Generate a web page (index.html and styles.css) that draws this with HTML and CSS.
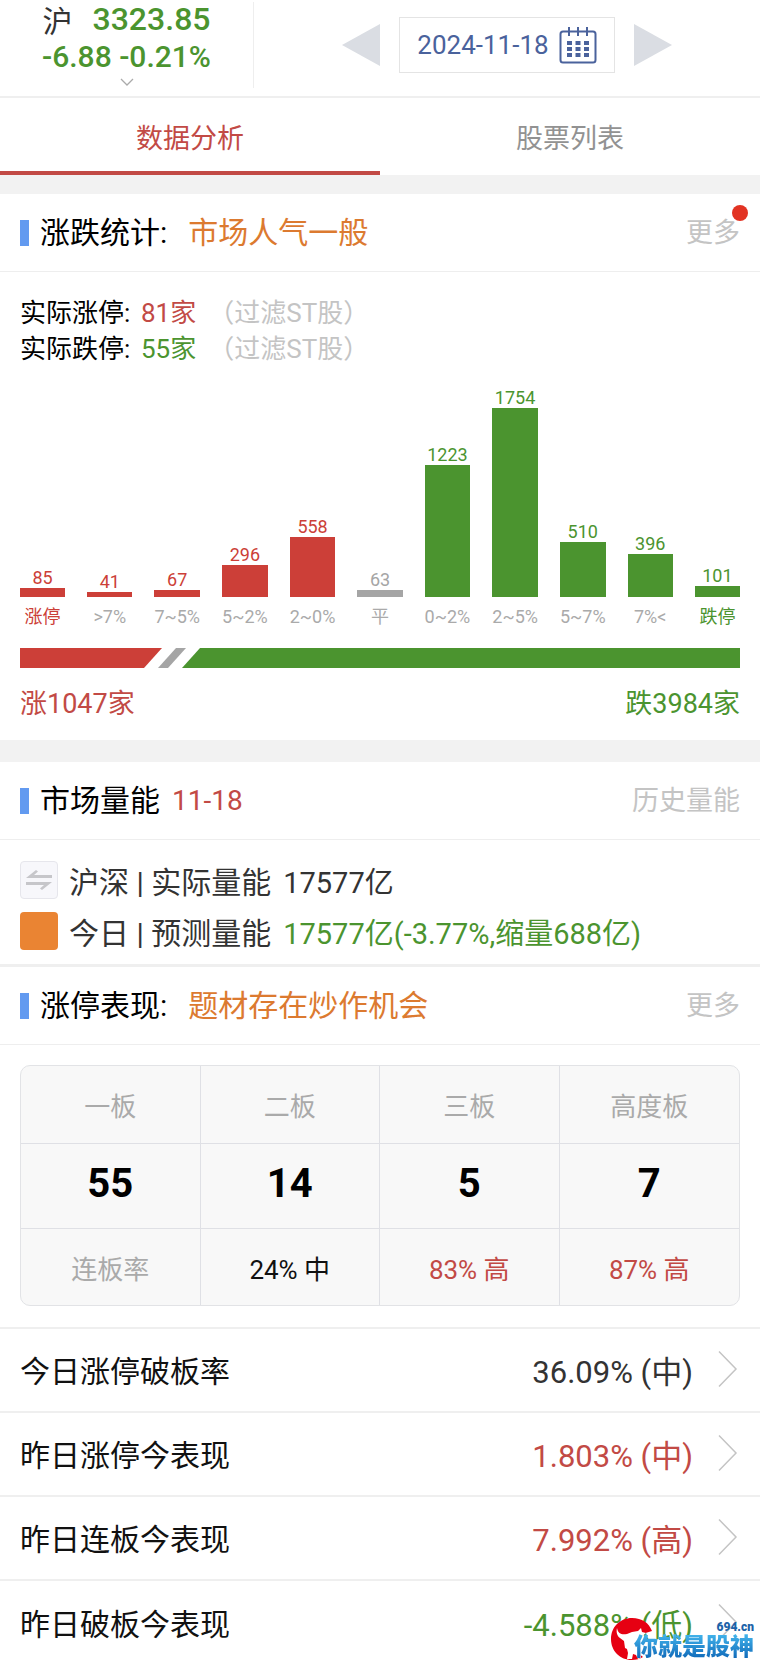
FILE: index.html
```
<!DOCTYPE html>
<html lang="zh-CN">
<head>
  <meta charset="UTF-8">
  <meta name="viewport" content="width=device-width, initial-scale=1.0">
  <title>数据分析</title>
  <link rel="stylesheet" href="styles.css">
</head>
<body>
  <div class="page">
    <header class="header">
      <div class="index">
        <div class="index-main">
          <span class="index-name">沪</span>
          <strong class="index-value">3323.85</strong>
        </div>
        <div class="index-change">-6.88 -0.21%</div>
        <svg class="index-arrow" width="14" height="8" viewBox="0 0 14 8"><path d="M1 1l6 6 6-6" fill="none" stroke="#aaa" stroke-width="1.3"/></svg>
      </div>
      <nav class="date-nav">
        <button type="button" class="arrow" aria-label="前一天">
          <svg width="38" height="42" viewBox="0 0 38 42"><path d="M38 0v42L0 21z" fill="#dadde3"/></svg>
        </button>
        <button type="button" class="date">
          <span>2024-11-18</span>
          <svg width="38" height="38" viewBox="0 0 38 38">
            <rect x="1.5" y="5.5" width="35" height="31" rx="2.5" fill="none" stroke="#4a629c" stroke-width="2"/>
            <path d="M10 1v9M19 1v9M28 1v9" stroke="#4a629c" stroke-width="2"/>
            <path d="M8 17h22M8 23h22M8 29h22" stroke="#4a629c" stroke-width="4" stroke-dasharray="5 3.500"/>
          </svg>
        </button>
        <button type="button" class="arrow" aria-label="后一天">
          <svg width="38" height="42" viewBox="0 0 38 42"><path d="M0 0v42l38-21z" fill="#dadde3"/></svg>
        </button>
      </nav>
    </header>

    <div class="tabs">
      <button type="button" class="tab active">数据分析</button>
      <button type="button" class="tab">股票列表</button>
    </div>

    <section class="block">
      <div class="section-head">
        <h2>涨跌统计:</h2>
        <span class="hint orange">市场人气一般</span>
        <a href="#" class="more badge">更多</a>
      </div>

      <div class="stats">
        <p><span class="stat-name">实际涨停:</span><span class="red">81家</span><span class="note">（过滤ST股）</span></p>
        <p><span class="stat-name">实际跌停:</span><span class="green">55家</span><span class="note">（过滤ST股）</span></p>
      </div>

      <div class="chart">
        <div class="col up"><span class="count">85</span><div class="bar" style="height: 9px"></div><span class="range named">涨停</span></div>
        <div class="col up"><span class="count">41</span><div class="bar" style="height: 5px"></div><span class="range">&gt;7%</span></div>
        <div class="col up"><span class="count">67</span><div class="bar" style="height: 7px"></div><span class="range">7~5%</span></div>
        <div class="col up"><span class="count">296</span><div class="bar" style="height: 32px"></div><span class="range">5~2%</span></div>
        <div class="col up"><span class="count">558</span><div class="bar" style="height: 60px"></div><span class="range">2~0%</span></div>
        <div class="col flat"><span class="count">63</span><div class="bar" style="height: 7px"></div><span class="range">平</span></div>
        <div class="col down"><span class="count">1223</span><div class="bar" style="height: 132px"></div><span class="range">0~2%</span></div>
        <div class="col down"><span class="count">1754</span><div class="bar" style="height: 189px"></div><span class="range">2~5%</span></div>
        <div class="col down"><span class="count">510</span><div class="bar" style="height: 55px"></div><span class="range">5~7%</span></div>
        <div class="col down"><span class="count">396</span><div class="bar" style="height: 43px"></div><span class="range">7%&lt;</span></div>
        <div class="col down"><span class="count">101</span><div class="bar" style="height: 11px"></div><span class="range named">跌停</span></div>
      </div>

      <div class="ratio">
        <div class="ratio-up"></div>
        <div class="ratio-flat"></div>
        <div class="ratio-down"></div>
      </div>
      <div class="totals">
        <span class="red">涨1047家</span>
        <span class="green">跌3984家</span>
      </div>
    </section>

    <section class="block">
      <div class="section-head">
        <h2>市场量能</h2>
        <span class="head-date red">11-18</span>
        <a href="#" class="more">历史量能</a>
      </div>
      <div class="volume">
        <div class="volume-row">
          <button type="button" class="swap" aria-label="切换">
            <svg width="26" height="20" viewBox="0 0 26 20"><path d="M26 8H0L10 0l2 1.500-4 3.500h18zM0 12h26L16 20l-2-1.500 4-3.500H0z" fill="#c6c6ca"/></svg>
          </button>
          <span>沪深 | 实际量能</span>
          <span class="amount">17577亿</span>
        </div>
        <div class="volume-row">
          <span class="swatch"></span>
          <span>今日 | 预测量能</span>
          <span class="amount green">17577亿(-3.77%,缩量688亿)</span>
        </div>
      </div>
    </section>

    <section class="limit">
      <div class="section-head">
        <h2>涨停表现:</h2>
        <span class="hint orange">题材存在炒作机会</span>
        <a href="#" class="more">更多</a>
      </div>
      <div class="table-wrap">
        <table class="boards">
          <thead>
            <tr><th>一板</th><th>二板</th><th>三板</th><th>高度板</th></tr>
          </thead>
          <tbody>
            <tr class="nums"><td>55</td><td>14</td><td>5</td><td>7</td></tr>
            <tr class="rates"><td class="muted">连板率</td><td>24% 中</td><td class="red">83% 高</td><td class="red">87% 高</td></tr>
          </tbody>
        </table>
      </div>
    </section>

    <div class="list">
      <a href="#" class="item">
        <span>今日涨停破板率</span>
        <span class="item-value">36.09% (中)</span>
        <svg width="20" height="38" viewBox="0 0 20 38"><path d="M1 1.500l17 17.500L1 36.500" fill="none" stroke="#c4c4c4" stroke-width="1.500"/></svg>
      </a>
      <a href="#" class="item">
        <span>昨日涨停今表现</span>
        <span class="item-value red">1.803% (中)</span>
        <svg width="20" height="38" viewBox="0 0 20 38"><path d="M1 1.500l17 17.500L1 36.500" fill="none" stroke="#c4c4c4" stroke-width="1.500"/></svg>
      </a>
      <a href="#" class="item">
        <span>昨日连板今表现</span>
        <span class="item-value red">7.992% (高)</span>
        <svg width="20" height="38" viewBox="0 0 20 38"><path d="M1 1.500l17 17.500L1 36.500" fill="none" stroke="#c4c4c4" stroke-width="1.500"/></svg>
      </a>
      <a href="#" class="item">
        <span>昨日破板今表现</span>
        <span class="item-value green">-4.588% (低)</span>
        <svg width="20" height="38" viewBox="0 0 20 38"><path d="M1 1.500l17 17.500L1 36.500" fill="none" stroke="#c4c4c4" stroke-width="1.500"/></svg>
      </a>
    </div>

    <div class="brand">
      <svg class="brand-logo" width="44" height="44" viewBox="0 0 44 44">
        <path d="M42 14C39 6 32 1 22 1 10 1 1 10 1 22s9 21 21 21c4 0 8-1 11-3l-5-4 1-18z" fill="#e60012"/>
        <path d="M7 11c1 6 5 7 10 6l5-2 6-1 3-3 1 4 4 1-5 4-1 9 1 12-3 1-2-4-3-1-1 5h-5l1-6-1-4-2-1-1-7-4-3c-3-2-4-6-3-10z" fill="#fff"/>
      </svg>
      <div class="brand-text">
        <span class="brand-site">694.cn</span>
        <span class="brand-name">你就是股神</span>
      </div>
    </div>
  </div>
</body>
</html>
```

FILE: styles.css
```
* {
  box-sizing: border-box;
}
body {
  margin: 0;
  background: #fff;
  color: #111;
  font-family: Roboto, "Noto Sans CJK SC", sans-serif;
  font-size: 30px;
}
button {
  padding: 0;
  border: none;
  background: none;
  font: inherit;
  cursor: pointer;
}
a {
  color: inherit;
  text-decoration: none;
}
svg {
  display: block;
}
h2,
p {
  margin: 0;
  font-size: inherit;
  font-weight: 400;
}
.page {
  position: relative;
  overflow: hidden;
}
.red {
  color: #c24a45;
}
.green {
  color: #4b942f;
}
.orange {
  color: #dc7a30;
}

/* header */
.header {
  display: flex;
  height: 98px;
  padding: 2px 0 8px;
  border-bottom: 2px solid #efefef;
}
.index {
  flex: 1;
  display: flex;
  flex-direction: column;
  align-items: center;
  border-right: 1px solid #eee;
  color: #4b942f;
}
.index-main {
  display: flex;
  align-items: center;
  gap: 20px;
  height: 34px;
}
.index-name {
  color: #333;
}
.index-value {
  font-size: 32px;
  font-weight: 500;
}
.index-change {
  line-height: 42px;
  font-weight: 500;
}
.date-nav {
  flex: 2;
  display: flex;
  align-items: center;
  justify-content: center;
  gap: 19px;
}
.date {
  display: flex;
  align-items: center;
  justify-content: center;
  gap: 10px;
  height: 56px;
  padding: 0 17px;
  border: 1px solid #e4e4e4;
  color: #4a629c;
  font-size: 26px;
}

/* tabs */
.tabs {
  display: flex;
  height: 77px;
}
.tab {
  flex: 1;
  padding-top: 4px;
  border-bottom: 4px solid transparent;
  color: #929292;
  font-size: 27px;
}
.tab.active {
  border-color: #c24a45;
  color: #c24a45;
}

/* sections */
.block:nth-of-type(1) {
  border-top: 19px solid #f2f2f2;
  border-bottom: 22px solid #f2f2f2;
}
.block:nth-of-type(2) {
  border-bottom: 3px solid #efefef;
}
.section-head {
  display: flex;
  align-items: center;
  height: 78px;
  padding: 0 20px;
  border-bottom: 1px solid #eee;
  line-height: 42px;
}
.section-head::before {
  content: "";
  width: 9px;
  height: 26px;
  margin-right: 11px;
  background: #629af0;
}
.section-head h2 {
  color: #000;
}
.hint {
  margin-left: 21px;
}
.head-date {
  margin-left: 12px;
  font-size: 28px;
}
.more {
  position: relative;
  margin-left: auto;
  color: #c4c4c4;
  font-size: 27px;
}
.badge::after {
  content: "";
  position: absolute;
  top: -7px;
  right: -8px;
  width: 16px;
  height: 16px;
  border-radius: 50%;
  background: #e23323;
}

/* up / down statistics */
.stats {
  padding: 23px 20px 0;
  font-size: 26px;
  line-height: 36px;
}
.stats p {
  display: flex;
}
.stat-name {
  width: 121px;
  color: #000;
}
.note {
  margin-left: 12px;
  color: #c4c4c4;
}
.chart {
  display: grid;
  grid-template-columns: repeat(11, 1fr);
  gap: 22px;
  align-items: end;
  height: 260px;
  padding: 0 20px;
  font-size: 18px;
}
.col {
  display: flex;
  flex-direction: column;
  align-items: center;
  white-space: nowrap;
}
.count {
  line-height: 21px;
}
.bar {
  align-self: stretch;
  background: currentColor;
}
.range {
  height: 30px;
  padding-top: 6px;
  color: #aaa;
  line-height: 28px;
}
.up {
  color: #cc3f38;
}
.down {
  color: #4b942f;
}
.flat {
  color: #a5a5a5;
}
.named {
  color: inherit;
}
.ratio {
  display: flex;
  height: 20px;
  margin: 21px 20px 0;
}
.ratio-up {
  flex: 0 0 142px;
  background: #cc3f38;
  clip-path: polygon(0 0, 100% 0, calc(100% - 18px) 100%, 0 100%);
}
.ratio-flat {
  width: 28px;
  margin: 0 -4px;
  background: #a5a5a5;
  clip-path: polygon(18px 0, 100% 0, 10px 100%, 0 100%);
}
.ratio-down {
  flex: 1;
  background: #4b942f;
  clip-path: polygon(18px 0, 100% 0, 100% 100%, 0 100%);
}
.totals {
  display: flex;
  justify-content: space-between;
  padding: 16px 20px;
  font-size: 27px;
  line-height: 40px;
}

/* volume */
.volume {
  display: grid;
  gap: 13px;
  padding: 21px 20px 14px;
  color: #333;
}
.volume-row {
  display: flex;
  align-items: center;
  height: 38px;
}
.swap,
.swatch {
  display: flex;
  align-items: center;
  justify-content: center;
  width: 38px;
  height: 38px;
  margin-right: 11px;
  border-radius: 4px;
}
.swap {
  border: 1px solid #e6e6ec;
  background: #f7f7fb;
}
.swatch {
  background: #ea8433;
}
.amount {
  margin-left: 12px;
  font-size: 29px;
}

/* boards table */
.table-wrap {
  padding: 20px 20px 21px;
  border-bottom: 2px solid #efefef;
}
.boards {
  width: 100%;
  border: 1px solid #e2e3e6;
  border-radius: 10px;
  border-spacing: 0;
  background: #f8f8f8;
  table-layout: fixed;
  text-align: center;
}
.boards th,
.boards td {
  height: 78px;
  padding: 0;
  border-right: 1px solid #dfe0e5;
  border-bottom: 1px solid #dfe0e5;
  font-size: 26px;
  font-weight: 400;
}
.boards th,
.boards .muted {
  color: #aaa;
}
.boards th:last-child,
.boards td:last-child {
  border-right: none;
}
.boards .nums td {
  height: 85px;
  padding-bottom: 6px;
  color: #000;
  font-size: 40px;
  font-weight: 700;
}
.boards .rates td {
  height: 76px;
  border-bottom: none;
}

/* result list */
.item {
  display: flex;
  align-items: center;
  height: 84px;
  padding: 0 22px 2px 20px;
  border-bottom: 2px solid #efefef;
}
.item:last-child {
  border-bottom: none;
}
.item-value {
  margin-left: auto;
  margin-right: 25px;
  color: #333;
  font-size: 31px;
}
.item-value.red {
  color: #c24a45;
}
.item-value.green {
  color: #4b942f;
}

/* brand mark over the last row */
.brand {
  position: absolute;
  right: 6px;
  bottom: 4px;
  display: flex;
  align-items: flex-end;
}
.brand-text {
  display: flex;
  flex-direction: column;
  align-items: flex-end;
  margin-left: -20px;
  font-weight: 900;
}
.brand-site {
  color: #1c62a8;
  font-size: 12px;
  line-height: 12px;
}
.brand-name {
  background: linear-gradient(#45b8ee, #0b62b4);
  -webkit-background-clip: text;
  background-clip: text;
  color: transparent;
  font-size: 24px;
  line-height: 28px;
}
```
